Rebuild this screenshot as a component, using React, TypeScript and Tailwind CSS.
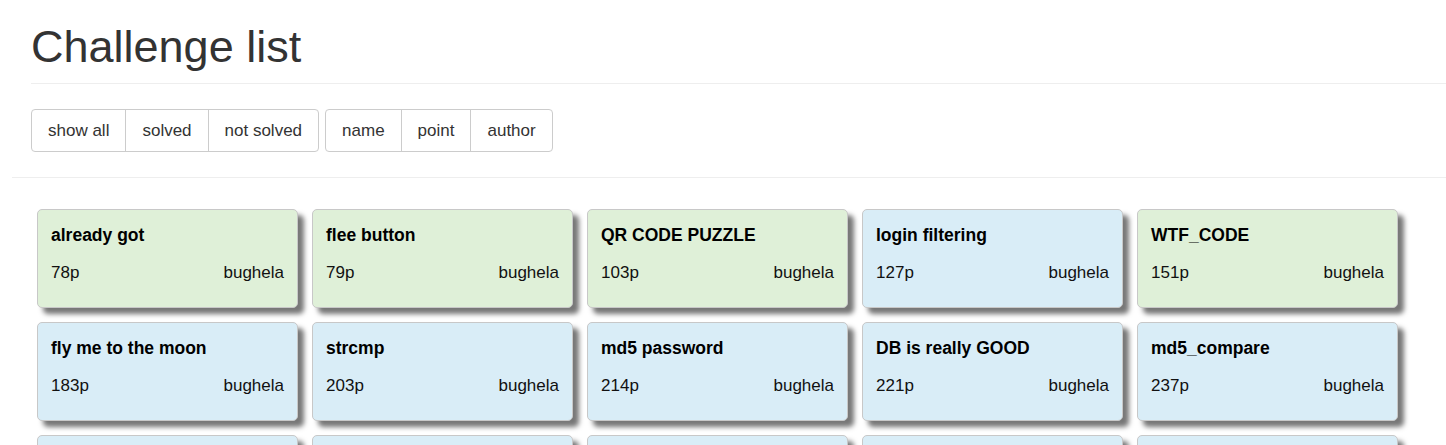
import React from 'react'

type Challenge = {
  name: string
  point: number
  author: string
  solved: boolean
}

const CHALLENGES: Challenge[] = [
  { name: 'already got', point: 78, author: 'bughela', solved: true },
  { name: 'flee button', point: 79, author: 'bughela', solved: true },
  { name: 'QR CODE PUZZLE', point: 103, author: 'bughela', solved: true },
  { name: 'login filtering', point: 127, author: 'bughela', solved: false },
  { name: 'WTF_CODE', point: 151, author: 'bughela', solved: true },
  { name: 'fly me to the moon', point: 183, author: 'bughela', solved: false },
  { name: 'strcmp', point: 203, author: 'bughela', solved: false },
  { name: 'md5 password', point: 214, author: 'bughela', solved: false },
  { name: 'DB is really GOOD', point: 221, author: 'bughela', solved: false },
  { name: 'md5_compare', point: 237, author: 'bughela', solved: false },
  { name: 'Simple_SQLi', point: 246, author: 'bughela', solved: false },
  { name: 'php-login', point: 256, author: 'bughela', solved: false },
  { name: 'Login', point: 265, author: 'bughela', solved: false },
  { name: 'SQLi Filtering', point: 272, author: 'bughela', solved: false },
  { name: 'Hashcrack', point: 281, author: 'bughela', solved: false },
]

const FILTERS = ['show all', 'solved', 'not solved']
const SORTS = ['name', 'point', 'author']

function ButtonGroup({ items }: { items: string[] }) {
  return (
    <div className="flex rounded-[4px] border border-[#ccc] bg-white">
      {items.map((label, i) => (
        <button
          key={label}
          className={`px-[16px] py-[10px] text-[17px] leading-[21px] text-[#333] ${
            i > 0 ? 'border-l border-[#ccc]' : ''
          }`}
        >
          {label}
        </button>
      ))}
    </div>
  )
}

export default function App() {
  return (
    <div
      className="min-h-screen bg-white pt-[23px]"
      style={{ fontFamily: '"Liberation Sans", Arial, sans-serif' }}
    >
      {/* Page header */}
      <div className="ml-[31px] border-b border-[#eee] pb-[12px]">
        <h1 className="text-[45px] leading-[48px] font-normal text-[#333]">
          Challenge list
        </h1>
      </div>

      {/* Filter / sort toolbar */}
      <div className="ml-[31px] mt-[25px] flex gap-[6px]">
        <ButtonGroup items={FILTERS} />
        <ButtonGroup items={SORTS} />
      </div>

      <div className="ml-[12px] mt-[25px] border-b border-[#eee]" />

      {/* Challenge cards */}
      <div className="ml-[37px] mt-[31px] grid grid-cols-[repeat(5,261px)] gap-[14px]">
        {CHALLENGES.map((c) => (
          <div
            key={c.name}
            className={`h-[99px] rounded-[5px] border border-[#c8c8c8] px-[13px] pt-[14px] shadow-[6px_6px_5px_#777] ${
              c.solved ? 'bg-[#dff0d8]' : 'bg-[#d9edf7]'
            }`}
          >
            <div className="text-[17.5px] font-bold leading-[22px] text-black">
              {c.name}
            </div>
            <div className="mt-[15px] flex justify-between text-[17px] leading-[24px] text-[#111]">
              <span>{c.point}p</span>
              <span>{c.author}</span>
            </div>
          </div>
        ))}
      </div>
    </div>
  )
}
